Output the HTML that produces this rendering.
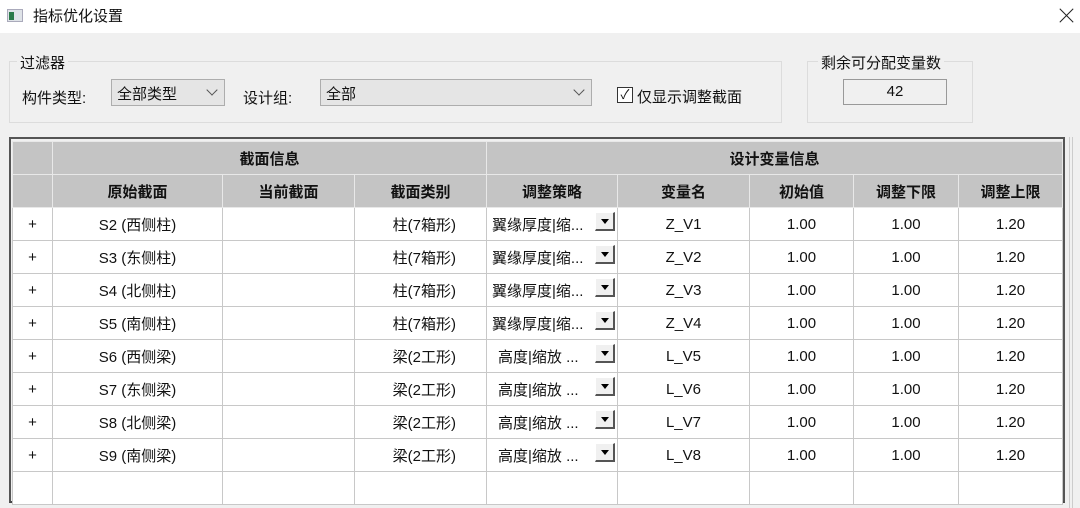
<!DOCTYPE html>
<html><head><meta charset="utf-8"><style>
*{margin:0;padding:0;box-sizing:border-box}
body{width:1080px;height:508px;background:#f0f0f0;font-family:"Liberation Sans","Noto Sans CJK SC",sans-serif;font-size:15px;color:#111;position:relative;overflow:hidden}
.title{position:absolute;left:0;top:0;width:1080px;height:33px;background:#fff}
.abs{position:absolute}
.combo{position:absolute;height:27px;border:1px solid #adadad;background:#e5e5e5;padding:3px 0 0 5px;font-size:15px}
.chev{position:absolute;right:8px;top:6px;width:8px;height:8px;border-right:1px solid #555;border-bottom:1px solid #555;transform:rotate(45deg)}
table{position:absolute;left:12px;top:141px;border-collapse:collapse;table-layout:fixed;background:#fff}
td{border:1px solid #c8c8c8;text-align:center;height:33px;padding:0;font-size:15px;white-space:nowrap;overflow:hidden;position:relative}
tr.h td{background:#c4c4c4;font-weight:bold;border:1px solid #e8e8e8}
td.rh{background:#f0f0f0}
.dd{text-align:left;padding-left:5px}
.btn{position:absolute;right:2px;top:4px;width:20px;height:19px;background:#f0f0f0;border:1px solid #fff;border-right:2px solid #555;border-bottom:2px solid #555}
.btn:after{content:"";position:absolute;left:5px;top:6px;border-left:4px solid transparent;border-right:4px solid transparent;border-top:5px solid #000}
.x{position:absolute;left:1060px;top:15px;width:19px;height:1px;background:#222}
</style></head><body>
<div class="title">
 <div class="abs" style="left:7px;top:9px;width:16px;height:13px;background:#dfe3e8;border:1px solid #aab"></div>
 <div class="abs" style="left:9px;top:12px;width:5px;height:8px;background:#2a7a4a"></div>
 <div class="abs" style="left:33px;top:5px;font-size:15px">指标优化设置</div>
 <div class="x" style="transform:rotate(45deg);left:1057px"></div>
 <div class="x" style="transform:rotate(-45deg);left:1057px"></div>
</div>
<div class="abs" style="left:9px;top:61px;width:773px;height:62px;border:1px solid #dcdcdc"></div>
<div class="abs" style="left:17px;top:52px;background:#f0f0f0;padding:0 3px">过滤器</div>
<div class="abs" style="left:22px;top:87px">构件类型:</div>
<div class="combo" style="left:111px;top:79px;width:114px">全部类型<div class="chev"></div></div>
<div class="abs" style="left:243px;top:87px">设计组:</div>
<div class="combo" style="left:320px;top:79px;width:272px">全部<div class="chev"></div></div>
<div class="abs" style="left:617px;top:87px;width:16px;height:16px;border:1px solid #333;background:#fff;font-size:13px;line-height:14px;text-align:center">✓</div>
<div class="abs" style="left:637px;top:86px">仅显示调整截面</div>
<div class="abs" style="left:807px;top:61px;width:166px;height:62px;border:1px solid #dcdcdc"></div>
<div class="abs" style="left:818px;top:52px;background:#f0f0f0;padding:0 3px">剩余可分配变量数</div>
<div class="abs" style="left:843px;top:79px;width:104px;height:26px;border:1px solid #999;background:#f0f0f0;text-align:center;padding-top:3px">42</div>
<div class="abs" style="left:9px;top:137px;width:1056px;height:366px;border:2px solid #555;border-bottom-color:#444"></div>
<div class="abs" style="left:1069px;top:137px;width:4px;height:371px;border-left:1px solid #ccc;border-right:1px solid #ccc"></div>
<table>
<colgroup><col style="width:40px"><col style="width:170px"><col style="width:132px"><col style="width:132px"><col style="width:131px"><col style="width:132px"><col style="width:104px"><col style="width:105px"><col style="width:104px"></colgroup>
<tr class="h"><td class="rh" style="height:31px"></td><td colspan="3">截面信息</td><td colspan="5">设计变量信息</td></tr>
<tr class="h"><td class="rh"></td><td>原始截面</td><td>当前截面</td><td>截面类别</td><td>调整策略</td><td>变量名</td><td>初始值</td><td>调整下限</td><td>调整上限</td></tr>
<tr><td>+</td><td>S2 (西侧柱)</td><td></td><td style="text-align:right;padding-right:30px">柱(7箱形)</td><td class="dd">翼缘厚度|缩...<div class="btn"></div></td><td>Z_V1</td><td>1.00</td><td>1.00</td><td>1.20</td></tr>
<tr><td>+</td><td>S3 (东侧柱)</td><td></td><td style="text-align:right;padding-right:30px">柱(7箱形)</td><td class="dd">翼缘厚度|缩...<div class="btn"></div></td><td>Z_V2</td><td>1.00</td><td>1.00</td><td>1.20</td></tr>
<tr><td>+</td><td>S4 (北侧柱)</td><td></td><td style="text-align:right;padding-right:30px">柱(7箱形)</td><td class="dd">翼缘厚度|缩...<div class="btn"></div></td><td>Z_V3</td><td>1.00</td><td>1.00</td><td>1.20</td></tr>
<tr><td>+</td><td>S5 (南侧柱)</td><td></td><td style="text-align:right;padding-right:30px">柱(7箱形)</td><td class="dd">翼缘厚度|缩...<div class="btn"></div></td><td>Z_V4</td><td>1.00</td><td>1.00</td><td>1.20</td></tr>
<tr><td>+</td><td>S6 (西侧梁)</td><td></td><td style="text-align:right;padding-right:30px">梁(2工形)</td><td class="dd" style="padding-left:11px">高度|缩放 ...<div class="btn"></div></td><td>L_V5</td><td>1.00</td><td>1.00</td><td>1.20</td></tr>
<tr><td>+</td><td>S7 (东侧梁)</td><td></td><td style="text-align:right;padding-right:30px">梁(2工形)</td><td class="dd" style="padding-left:11px">高度|缩放 ...<div class="btn"></div></td><td>L_V6</td><td>1.00</td><td>1.00</td><td>1.20</td></tr>
<tr><td>+</td><td>S8 (北侧梁)</td><td></td><td style="text-align:right;padding-right:30px">梁(2工形)</td><td class="dd" style="padding-left:11px">高度|缩放 ...<div class="btn"></div></td><td>L_V7</td><td>1.00</td><td>1.00</td><td>1.20</td></tr>
<tr><td>+</td><td>S9 (南侧梁)</td><td></td><td style="text-align:right;padding-right:30px">梁(2工形)</td><td class="dd" style="padding-left:11px">高度|缩放 ...<div class="btn"></div></td><td>L_V8</td><td>1.00</td><td>1.00</td><td>1.20</td></tr>
<tr><td style="height:27px"></td><td></td><td></td><td></td><td></td><td></td><td></td><td></td><td></td></tr>
</table>
</body></html>
